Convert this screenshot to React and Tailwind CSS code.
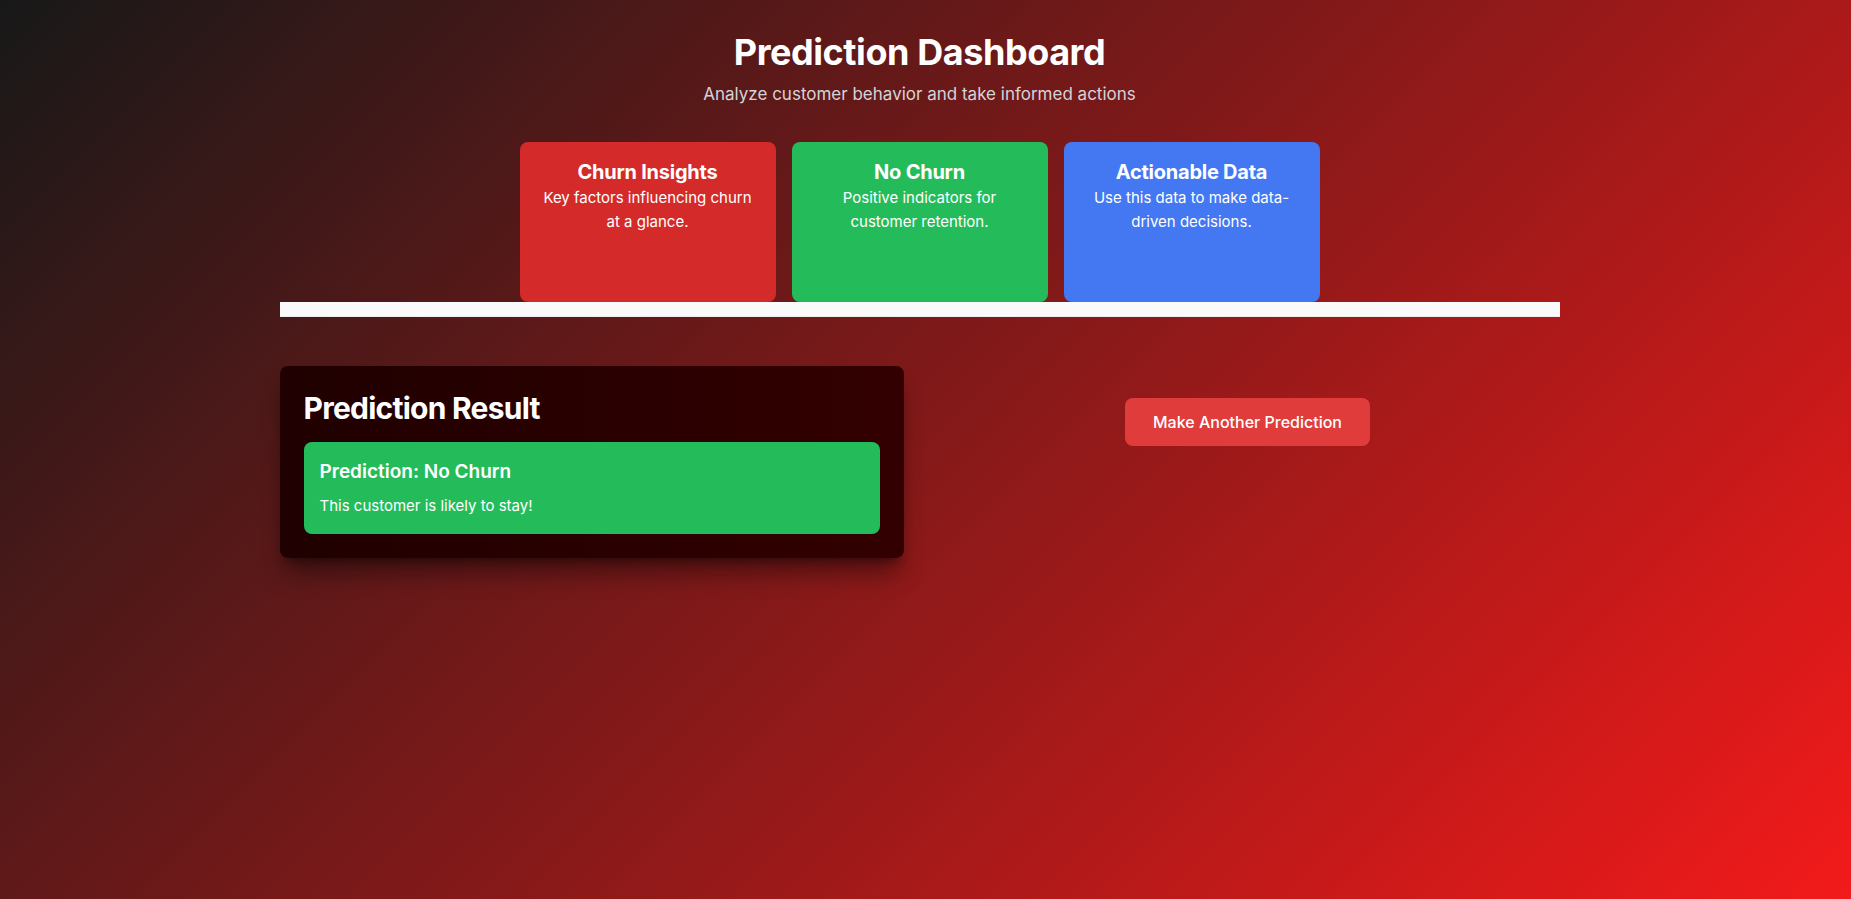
import React from "react";

const cards = [
  { title: "Churn Insights", text: "Key factors influencing churn at a glance.", color: "bg-[#d42a2a]" },
  { title: "No Churn", text: "Positive indicators for customer retention.", color: "bg-[#24bc5a]" },
  { title: "Actionable Data", text: "Use this data to make data-driven decisions.", color: "bg-[#4378f2]" },
];

export default function App() {
  return (
    <div
      className="min-h-screen w-full bg-linear-[135deg] from-[#181818] to-[#f31a1a] text-white pl-6 pr-9 py-8"
      style={{ fontFamily: "Inter, 'Noto Sans', sans-serif" }}
    >
      <div className="max-w-7xl mx-auto">
        <div className="text-center">
          <h1 className="text-4xl font-bold tracking-[-0.012em]">Prediction Dashboard</h1>
          <p className="mt-[10px] text-[17px] leading-6 text-[#d4d4d8]">Analyze customer behavior and take informed actions</p>
        </div>

        <div className="mt-[36px]">
          <div className="flex justify-center gap-4">
            {cards.map((c) => (
              <div key={c.title} className={`w-64 h-40 rounded-lg p-4 text-center ${c.color}`}>
                <div className="text-xl font-bold tracking-[-0.012em]">{c.title}</div>
                <div className="text-[15px] leading-6">{c.text}</div>
              </div>
            ))}
          </div>
          <div className="h-[15px] bg-[#fafafa] border-b border-[#eeeeee]" />
        </div>

        <div className="mt-[49px] grid grid-cols-2 gap-8 items-start">
          <div className="rounded-lg bg-linear-to-r from-[#200000] to-[#330000] p-6 shadow-xl shadow-black/40">
            <h2 className="text-3xl font-bold tracking-tight">Prediction Result</h2>
            <div className="mt-4 rounded-lg bg-[#24bc5a] p-4">
              <div className="text-[19px] leading-7 font-semibold">Prediction: No Churn</div>
              <div className="mt-2 text-[15px] leading-6">This customer is likely to stay!</div>
            </div>
          </div>
          <div className="flex justify-center pt-8">
            <button className="rounded-lg bg-[#e03c3c] px-7 py-3 text-base font-medium text-white">
              Make Another Prediction
            </button>
          </div>
        </div>
      </div>
    </div>
  );
}
